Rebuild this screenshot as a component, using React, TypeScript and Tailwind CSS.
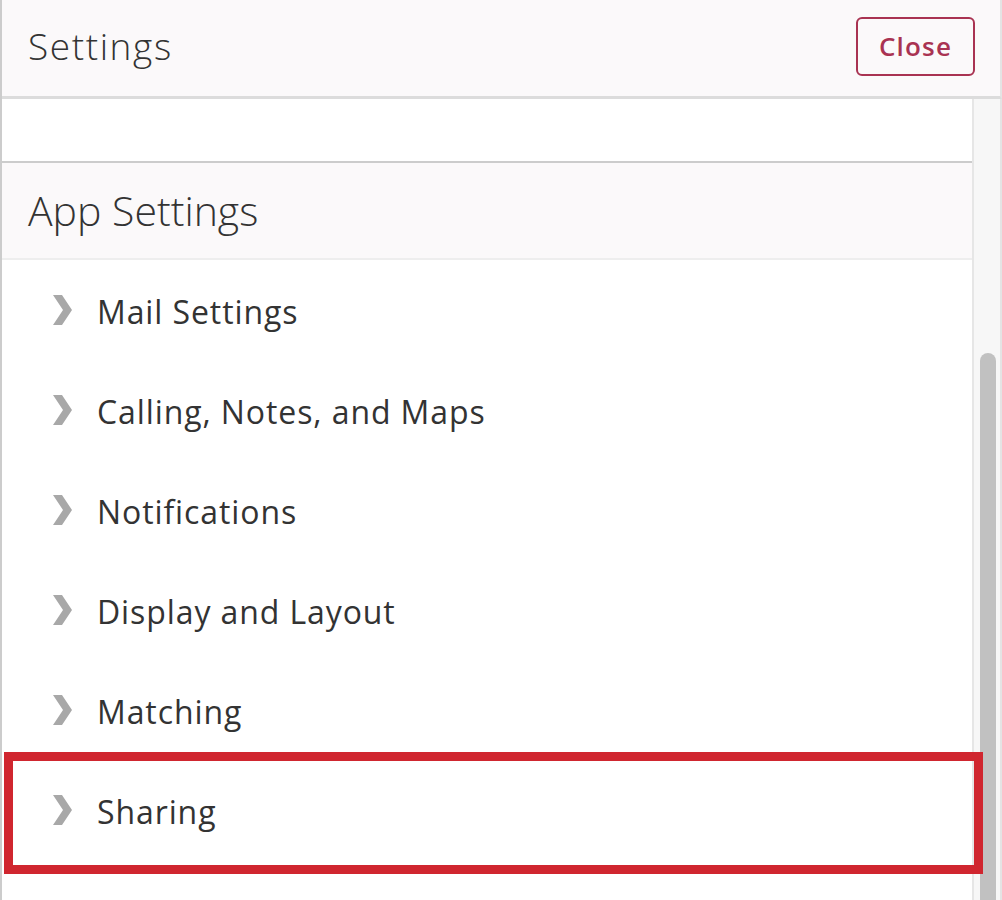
import React from 'react';

const ITEMS = [
  'Mail Settings',
  'Calling, Notes, and Maps',
  'Notifications',
  'Display and Layout',
  'Matching',
  'Sharing',
];

const Chevron: React.FC = () => (
  <svg width="19" height="30" viewBox="0 0 19 30" className="shrink-0">
    <path d="M0 0 H9 L19 15 L9 30 H0 L10 15 Z" fill="#a8a8a8" />
  </svg>
);

const App: React.FC = () => {
  return (
    <div
      className="w-[1002px] h-[900px] overflow-hidden flex flex-col bg-white border-l-2 border-[#cccccc]"
      style={{ fontFamily: '"Open Sans", Lato, sans-serif' }}
    >
      <header className="h-[99px] shrink-0 flex items-center justify-between bg-[#fbf9fa] border-b-[3px] border-[#dcdcdc] border-r-2 border-r-[#e4e4e4] pl-[26px] pr-[25px] pb-[4px]">
        <h1 className="text-[37px] font-light text-[#333333] tracking-[1.6px]">Settings</h1>
        <button className="w-[119px] h-[59px] border-2 border-[#a93352] rounded-[6px] text-[#a93352] text-[26px] font-semibold tracking-[1.2px]">
          Close
        </button>
      </header>

      <div className="flex-1 flex min-h-0">
        <main className="flex-1 flex flex-col">
          <div className="h-[62px] shrink-0" />
          <div className="h-[99px] shrink-0 flex items-center bg-[#fbf9fa] border-t-2 border-[#cccccc] border-b-2 border-b-[#eeeeee] pl-[26px]">
            <h2 className="text-[41px] font-light text-[#333333]">App Settings</h2>
          </div>
          {ITEMS.map((label) => (
            <div key={label} className="relative h-[100px] shrink-0 flex items-center pl-[51px] gap-[25px]">
              <Chevron />
              <span className="text-[32px] text-[#333333] tracking-[0.9px] pt-[4px]">{label}</span>
              {label === 'Sharing' && (
                <div className="absolute left-[2px] right-[-11px] top-[-8px] bottom-[-14px] border-[9px] border-[#d0262f]" />
              )}
            </div>
          ))}
        </main>

        <div className="w-[30px] shrink-0 flex justify-start pl-[6px] bg-[#f7f7f7] border-l-2 border-[#e6e6e6] border-r-2 border-r-[#e4e4e4]">
          <div className="w-[16px] mt-[254px] h-[700px] bg-[#c1c1c1] rounded-t-full" />
        </div>
      </div>
    </div>
  );
};

export default App;
